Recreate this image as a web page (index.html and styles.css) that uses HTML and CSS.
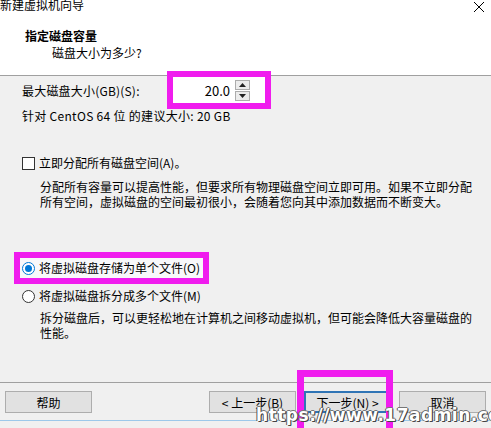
FILE: index.html
```html
<!DOCTYPE html>
<html lang="zh-CN">
<head>
  <meta charset="UTF-8" />
  <title>新建虚拟机向导</title>
  <link rel="stylesheet" href="styles.css">
</head>
<body>
  <div class="window">
    <div class="header">
      <div class="titlebar">
        <span class="title">新建虚拟机向导</span>
        <svg class="close" width="12" height="12" viewBox="0 0 12 12">
          <path d="M1 1 L11 11 M11 1 L1 11" stroke="#000" stroke-width="1" fill="none"/>
        </svg>
      </div>
      <div class="heading">指定磁盘容量</div>
      <div class="subheading">磁盘大小为多少?</div>
    </div>

    <div class="content">
      <div class="size-row">
        <span class="size-label">最大磁盘大小(GB)(S):</span>
        <div class="spin">
          <span class="spin-value">20.0</span>
          <div class="spin-btns">
            <div class="spin-btn">
              <svg width="7" height="4" viewBox="0 0 7 4"><path d="M0 4 L3.5 0 L7 4 Z" fill="#222"/></svg>
            </div>
            <div class="spin-btn">
              <svg width="7" height="4" viewBox="0 0 7 4"><path d="M0 0 L3.5 4 L7 0 Z" fill="#222"/></svg>
            </div>
          </div>
        </div>
      </div>
      <div class="hint">针对 CentOS 64 位 的建议大小: 20 GB</div>

      <div class="option check-row">
        <span class="checkbox"></span>
        <span>立即分配所有磁盘空间(A)。</span>
      </div>
      <p class="desc">分配所有容量可以提高性能，但要求所有物理磁盘空间立即可用。如果不立即分配所有空间，虚拟磁盘的空间最初很小，会随着您向其中添加数据而不断变大。</p>

      <div class="option radio-row marked">
        <span class="radio checked"></span>
        <span>将虚拟磁盘存储为单个文件(O)</span>
      </div>
      <div class="option radio-row second">
        <span class="radio"></span>
        <span>将虚拟磁盘拆分成多个文件(M)</span>
      </div>
      <p class="desc desc-split">拆分磁盘后，可以更轻松地在计算机之间移动虚拟机，但可能会降低大容量磁盘的性能。</p>
    </div>

    <div class="footer">
      <button class="btn">帮助</button>
      <div class="nav-btns">
        <button class="btn">&lt; 上一步(B)</button>
        <button class="btn default">下一步(N) &gt;</button>
        <button class="btn">取消</button>
      </div>
    </div>
    <div class="window-edge"></div>

    <div class="mark-next"></div>
    <div class="watermark">https://www.17admin.cc</div>
  </div>
</body>
</html>
```

FILE: styles.css
```css
body {
  margin: 0;
  background: #f0f0f0;
  font-family: "Noto Sans CJK SC", "Noto Sans", sans-serif;
  font-size: 12px;
  color: #000;
}

.window {
  position: relative;
  width: 491px;
  height: 428px;
  display: flex;
  flex-direction: column;
  background: #f0f0f0;
  overflow: hidden;
}

.header {
  height: 76px;
  background: #fff;
  border-bottom: 1px solid #a0a0a0;
  box-sizing: border-box;
}

.titlebar {
  display: flex;
  justify-content: space-between;
  align-items: center;
  height: 14px;
  line-height: 14px;
  margin-top: -2px;
  padding-right: 6px;
}

.close {
  margin-top: 4px;
}

.heading {
  margin: 16px 0 0 25px;
  font-weight: bold;
  line-height: 16px;
}

.subheading {
  margin-left: 52px;
  line-height: 17px;
}

.content {
  padding-left: 22px;
}

.size-row {
  display: flex;
  align-items: center;
  margin-top: 1px;
  height: 26px;
}

.size-label {
  width: 151px;
  letter-spacing: 0.2px;
}

.spin {
  display: flex;
  align-items: center;
  justify-content: flex-end;
  gap: 5px;
  width: 92px;
  height: 26px;
  padding-right: 15px;
  box-sizing: border-box;
  background: #fff;
  outline: 6px solid #f01cee;
}

.spin-value {
  font-size: 13px;
}

.spin-btns {
  display: flex;
  flex-direction: column;
  gap: 1px;
}

.spin-btn {
  display: flex;
  align-items: center;
  justify-content: center;
  width: 13px;
  height: 8px;
  border: 1px solid #acacac;
  background: #ececec;
}

.hint {
  margin-top: 5px;
  line-height: 16px;
  letter-spacing: 0.3px;
}

.option {
  display: flex;
  align-items: center;
  gap: 4px;
  line-height: 16px;
}

.check-row {
  margin-top: 31px;
}

.checkbox {
  width: 11px;
  height: 11px;
  border: 1px solid #333;
  background: #fff;
}

.desc {
  margin: 8px 0 0 18px;
  width: 436px;
  line-height: 15px;
}

.radio {
  width: 11px;
  height: 11px;
  border: 1px solid #333;
  border-radius: 50%;
  background: #fff;
  display: flex;
  align-items: center;
  justify-content: center;
}

.radio.checked {
  border-color: #0078d7;
}

.radio.checked::after {
  content: "";
  width: 7px;
  height: 7px;
  border-radius: 50%;
  background: #0078d7;
}

.marked {
  width: fit-content;
  margin: 49px 0 0 -2px;
  padding: 2px 3px 2px 2px;
  background: #f8f8fa;
  outline: 6px solid #f01cee;
}

.second {
  margin-top: 10px;
}

.desc-split {
  margin-top: 6px;
}

.footer {
  margin-top: auto;
  display: flex;
  align-items: center;
  border-top: 1px solid #a0a0a0;
  padding: 8px 5px 7px;
}

.nav-btns {
  display: flex;
  gap: 8px;
  margin-left: auto;
}

.btn {
  width: 87px;
  height: 22px;
  padding: 0;
  font-family: inherit;
  font-size: 12px;
  color: #000;
  background: #e1e1e1;
  border: 1px solid #adadad;
}

.btn.default {
  border: 2px solid #2f74b5;
}

.window-edge {
  height: 7px;
  border-top: 1px solid #9cc8ea;
}

.mark-next {
  position: absolute;
  left: 297px;
  top: 370px;
  width: 82px;
  height: 70px;
  border: 7px solid #f01cee;
}

.watermark {
  position: absolute;
  left: 256px;
  top: 405px;
  font-family: "DejaVu Sans", sans-serif;
  font-weight: bold;
  font-size: 17px;
  letter-spacing: 0.5px;
  color: #fff;
  text-shadow: 1px 1px 0 #444, -1px 0 0 #555, 0 -1px 0 #777, 1px 0 0 #555;
}
```
